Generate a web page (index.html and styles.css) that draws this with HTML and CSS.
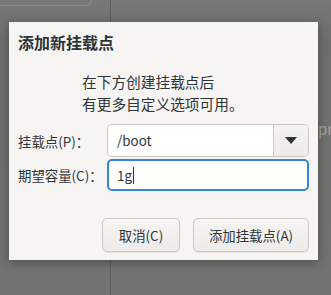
FILE: index.html
```html
<!DOCTYPE html>
<html lang="zh-CN">
<head>
    <meta charset="UTF-8">
    <meta name="viewport" content="width=device-width, initial-scale=1.0">
    <title>添加新挂载点</title>
    <link rel="stylesheet" href="styles.css">
</head>
<body>
    <div class="backdrop">
        <div class="bg-panel"></div>
        <div class="bg-divider"></div>
        <div class="bg-text">pr</div>
    </div>

    <div class="dialog">
        <h1 class="dialog-title">添加新挂载点</h1>
        <p class="dialog-message">在下方创建挂载点后<br>有更多自定义选项可用。</p>

        <div class="form">
            <label class="form-label">挂载点(P)：</label>
            <div class="combo">
                <div class="combo-entry">/boot</div>
                <div class="combo-button">
                    <svg width="12" height="7" viewBox="0 0 12 7"><path d="M0 0 H12 L6 7 Z" fill="#2e3436"/></svg>
                </div>
            </div>
            <label class="form-label">期望容量(C)：</label>
            <div class="entry focused">1g<span class="caret"></span></div>
        </div>

        <div class="actions">
            <button class="btn btn-cancel">取消(C)</button>
            <button class="btn btn-add">添加挂载点(A)</button>
        </div>
    </div>
</body>
</html>
```

FILE: styles.css
```css
body {
    margin: 0;
    padding: 0;
    width: 331px;
    height: 295px;
    overflow: hidden;
    background-color: #727271;
    font-family: "Noto Sans CJK SC", "Noto Sans", sans-serif;
    color: #2e3436;
    position: relative;
}
.backdrop {
    height: 295px;
    position: relative;
    background: linear-gradient(#787877, #6f6f6e 40px, #737372);
}
.bg-panel {
    width: 91px;
    height: 5px;
    border: 1px solid #8a8a88;
    border-top: none;
    border-left: none;
    border-radius: 0 0 6px 0;
}
.bg-divider {
    position: absolute;
    left: 110px;
    top: 0;
    width: 1px;
    height: 295px;
    background-color: #5e5e5c;
}
.bg-text {
    position: absolute;
    left: 318px;
    top: 118px;
    font-size: 15px;
    white-space: nowrap;
    color: #a3a3a1;
}
.dialog {
    position: absolute;
    left: 9px;
    top: 22px;
    width: 309px;
    height: 238px;
    box-sizing: border-box;
    background-color: #f6f5f4;
    box-shadow: 0 2px 10px rgba(0, 0, 0, 0.35);
    padding: 9px 9px 0 9px;
    display: flex;
    flex-direction: column;
}
.dialog-title {
    margin: 0;
    font-size: 16px;
    font-weight: bold;
    line-height: 22px;
}
.dialog-message {
    margin: 18px 0 0 64px;
    font-size: 14.7px;
    line-height: 22px;
}
.form {
    margin-top: 9px;
    display: grid;
    grid-template-columns: 89px 202px;
    row-gap: 2px;
    align-items: center;
}
.form-label {
    font-size: 13.4px;
    white-space: nowrap;
}
.combo {
    display: flex;
    height: 33px;
    box-sizing: border-box;
    border: 1px solid #cdc7c2;
    border-radius: 5px;
    background-color: #ffffff;
    overflow: hidden;
}
.combo-entry {
    flex: 1;
    padding-left: 9px;
    font-size: 13.4px;
    line-height: 31px;
}
.combo-button {
    width: 34px;
    border-left: 1px solid #cdc7c2;
    background: linear-gradient(#f4f3f2, #edebe9);
    display: flex;
    align-items: center;
    justify-content: center;
}
.entry {
    height: 32px;
    box-sizing: border-box;
    border: 2px solid #3584e4;
    border-radius: 5px;
    background-color: #ffffff;
    padding-left: 8px;
    font-size: 13.4px;
    line-height: 28px;
    display: flex;
    align-items: center;
}
.caret {
    display: inline-block;
    width: 1px;
    height: 17px;
    background-color: #2e3436;
    margin-left: 1px;
}
.actions {
    margin-top: 27px;
    display: flex;
    justify-content: flex-end;
    gap: 13px;
}
.btn {
    height: 34px;
    box-sizing: border-box;
    padding: 0;
    border: 1px solid #cdc7c2;
    border-radius: 5px;
    background: linear-gradient(#f6f5f4, #edebe9);
    box-shadow: 0 1px rgba(0, 0, 0, 0.07);
    font-family: "Noto Sans CJK SC", "Noto Sans", sans-serif;
    font-size: 13.4px;
    white-space: nowrap;
    color: #2e3436;
}
.btn-cancel {
    width: 78px;
}
.btn-add {
    width: 116px;
}
```
